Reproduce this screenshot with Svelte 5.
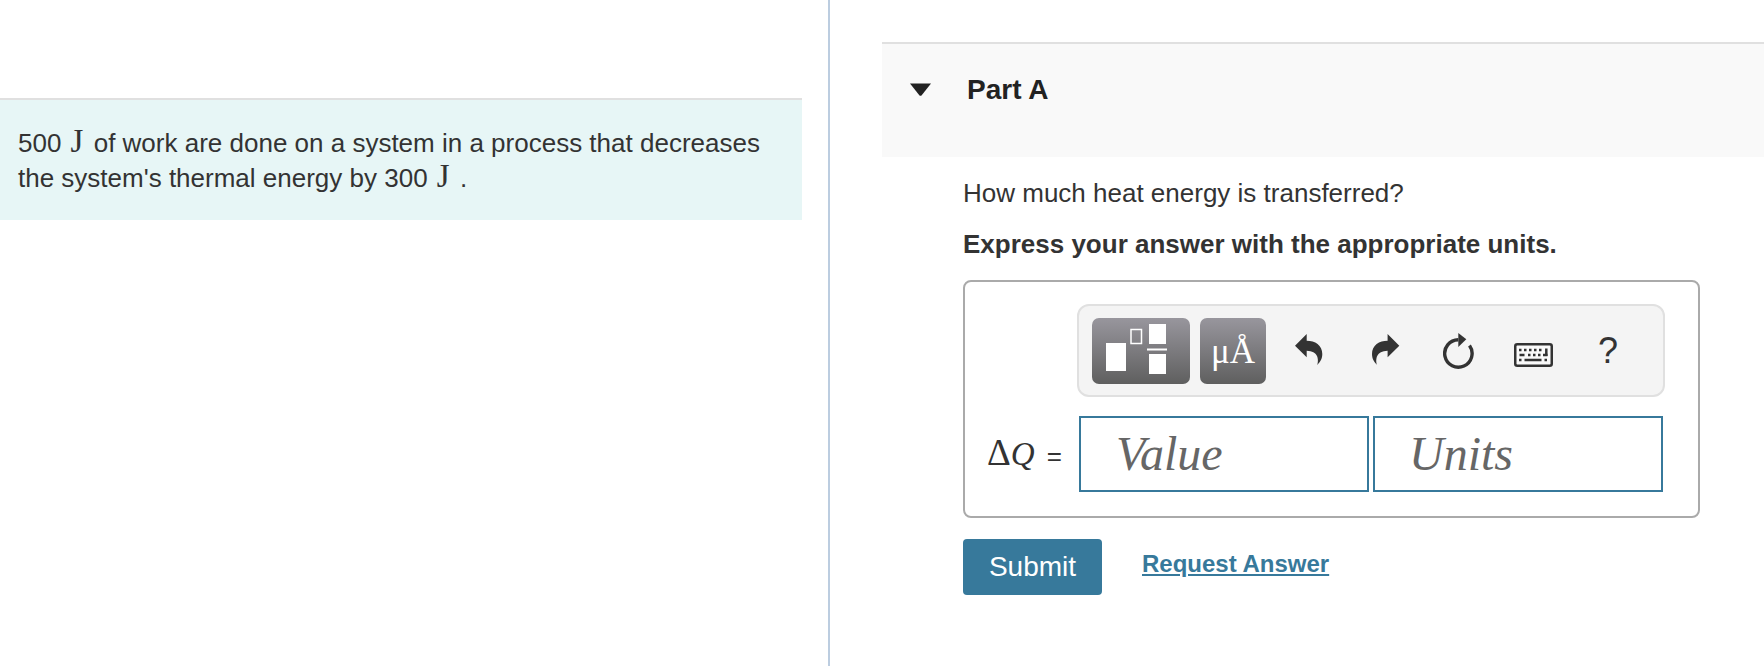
<script>
  const heading = 'Part A';
</script>

<div class="page">
  <section class="left">
    <div class="intro">
      <p>500 <span class="unit">J</span> of work are done on a system in a process that decreases<br />the system's thermal energy by 300 <span class="unit">J</span> .</p>
    </div>
  </section>
  <div class="divider"></div>
  <section class="right">
    <header class="part">
      <svg class="caret" width="21" height="13" viewBox="0 0 21 13"><path d="M0 0.500H21L11.500 12.500Q10.500 13 9.500 12.500Z" fill="#222" /></svg>
      <h2>{heading}</h2>
    </header>
    <div class="content">
      <p class="question">How much heat energy is transferred?</p>
      <p class="instruction">Express your answer with the appropriate units.</p>
      <div class="answer">
        <div class="toolbar">
          <div class="tool wide">
            <svg width="98" height="66" viewBox="0 0 98 66">
              <rect x="14" y="25" width="20" height="28" fill="#fff" />
              <rect x="39" y="11.500" width="10.500" height="14" fill="none" stroke="#fff" stroke-width="1.500" />
              <rect x="57" y="6" width="17" height="20" fill="#fff" />
              <rect x="55" y="30.500" width="20" height="2" fill="#fff" />
              <rect x="57" y="36" width="17" height="20" fill="#fff" />
            </svg>
          </div>
          <div class="tool narrow"><span class="mu">μÅ</span></div>
          <svg class="undo" width="28" height="31" viewBox="0 0 28 31"><path d="M0 11.700L11.700 0V6.700C20 6.700 27.300 11 27.300 20C27.300 25 25 28 22.300 31C24 25 23 17 11.700 16.700V23.300Z" fill="#333" /></svg>
          <svg class="redo" width="28" height="31" viewBox="0 0 28 31"><path d="M27.300 11.700L15.600 0V6.700C7.300 6.700 0 11 0 20C0 25 2.300 28 5 31C3.300 25 4.300 17 15.600 16.700V23.300Z" fill="#333" /></svg>
          <svg class="refresh" width="31" height="36" viewBox="0 0 31 36">
            <path d="M15.300 6.800A13.700 13.700 0 1 0 26.500 12.500" fill="none" stroke="#333" stroke-width="3.400" />
            <path d="M15.300 0L23.300 6.300L15.300 14Z" fill="#333" />
          </svg>
          <svg class="keys" width="39" height="24" viewBox="0 0 39 24">
            <rect x="1.250" y="1.250" width="36.500" height="21.500" rx="2" fill="#fafafa" stroke="#333" stroke-width="2.500" />
            <path d="M5 7H7.500M10 7H12.500M15 7H17.500M20 7H22.500M25 7H27.500" stroke="#333" stroke-width="2.500" />
            <path d="M5.500 12H10.500M14 12H16.500M19 12H21.500M24 12H26.500M29 12H33.500" stroke="#333" stroke-width="2.500" />
            <path d="M32.300 5.500V13" stroke="#333" stroke-width="2.500" />
            <path d="M5 17H7.500M10.500 17H27.500M30.500 17H33" stroke="#333" stroke-width="2.500" />
          </svg>
          <span class="help">?</span>
        </div>
        <div class="entry">
          <span class="label"><span class="delta">Δ</span><i>Q</i><span class="eq">=</span></span>
          <div class="field">Value</div>
          <div class="field second">Units</div>
        </div>
      </div>
      <div class="actions">
        <button type="button">Submit</button>
        <a href="#answer">Request Answer</a>
      </div>
    </div>
  </section>
</div>

<style>
  :global(body) {
    margin: 0;
    background: #fff;
  }
  .page {
    display: flex;
    height: 666px;
    overflow: hidden;
    font-family: "Liberation Sans", Arial, sans-serif;
    color: #333;
  }
  .left {
    width: 828px;
    flex: none;
    padding-top: 98px;
    box-sizing: border-box;
  }
  .intro {
    width: 802px;
    height: 122px;
    box-sizing: border-box;
    background: #e7f6f6;
    border-top: 2px solid #e0e0e0;
    padding: 25px 0 0 18px;
  }
  .intro p {
    margin: 0;
    font-size: 26px;
    line-height: 34px;
  }
  .unit {
    font-family: "Liberation Serif", serif;
    font-size: 33px;
    line-height: 1;
    margin: 0 3px 0 2px;
  }
  .divider {
    width: 2px;
    flex: none;
    background: #bccde0;
  }
  .right {
    flex: 1;
    margin-left: 52px;
    padding-top: 42px;
  }
  .part {
    height: 115px;
    box-sizing: border-box;
    border-top: 2px solid #e0e0e0;
    background: #f9f9f9;
    display: flex;
    align-items: flex-start;
    padding: 39px 0 0 28px;
  }
  .caret {
    flex: none;
  }
  .part h2 {
    margin: -9px 0 0 36px;
    font-size: 28px;
    line-height: 32px;
    font-weight: 700;
    color: #222;
  }
  .content {
    padding-left: 81px;
  }
  .question,
  .instruction {
    margin: 0;
    font-size: 26px;
    line-height: 32px;
    color: #333;
  }
  .question {
    padding-top: 20px;
  }
  .instruction {
    padding-top: 19px;
    font-weight: 700;
  }
  .answer {
    width: 737px;
    height: 238px;
    box-sizing: border-box;
    margin-top: 20px;
    border: 2px solid #aaa;
    border-radius: 8px;
    padding: 22px 0 0 112px;
  }
  .toolbar {
    width: 588px;
    height: 93px;
    box-sizing: border-box;
    display: flex;
    align-items: center;
    background: #f4f4f4;
    border: 2px solid #e0e0e0;
    border-radius: 12px;
    padding-left: 13px;
  }
  .tool {
    height: 66px;
    border-radius: 7px;
    background: linear-gradient(#98969d, #5f5f5f);
    flex: none;
    color: #fff;
  }
  .tool svg {
    display: block;
  }
  .wide {
    width: 98px;
  }
  .narrow {
    width: 66px;
    margin-left: 10px;
    text-align: center;
    overflow: hidden;
  }
  .mu {
    display: block;
    font-family: "Liberation Serif", serif;
    font-size: 35px;
    line-height: 66px;
    padding-top: 1px;
  }
  .undo {
    margin-left: 29px;
    margin-bottom: 2px;
    flex: none;
  }
  .redo {
    margin-left: 49px;
    margin-bottom: 2px;
    flex: none;
  }
  .refresh {
    margin-left: 43px;
    flex: none;
  }
  .keys {
    margin-left: 40px;
    margin-top: 9px;
    flex: none;
  }
  .help {
    margin-left: 45px;
    font-size: 36px;
    font-weight: 400;
    line-height: 40px;
    color: #333;
  }
  .entry {
    display: flex;
    align-items: center;
    margin-top: 19px;
    margin-left: -90px;
  }
  .label {
    width: 92px;
    flex: none;
    margin-bottom: 4px;
    font-family: "Liberation Serif", serif;
    font-size: 33px;
    white-space: nowrap;
    color: #333;
  }
  .delta {
    font-size: 37px;
  }
  .eq {
    font-family: "Liberation Sans", sans-serif;
    font-size: 26px;
    margin-left: 12px;
  }
  .field {
    width: 290px;
    height: 76px;
    box-sizing: border-box;
    border: 2px solid #37799b;
    font-family: "Liberation Serif", serif;
    font-style: italic;
    font-size: 48px;
    line-height: 72px;
    color: #666;
    padding-left: 35px;
  }
  .second {
    margin-left: 4px;
    padding-left: 34px;
  }
  .actions {
    display: flex;
    align-items: flex-start;
    margin-top: 21px;
  }
  button {
    width: 139px;
    height: 56px;
    border: none;
    border-radius: 4px;
    background: #37799b;
    color: #fff;
    font-family: "Liberation Sans", Arial, sans-serif;
    font-size: 28px;
    padding: 0;
  }
  a {
    margin-left: 40px;
    margin-top: 11px;
    font-size: 24px;
    line-height: 28px;
    font-weight: 700;
    color: #37799b;
  }
</style>
